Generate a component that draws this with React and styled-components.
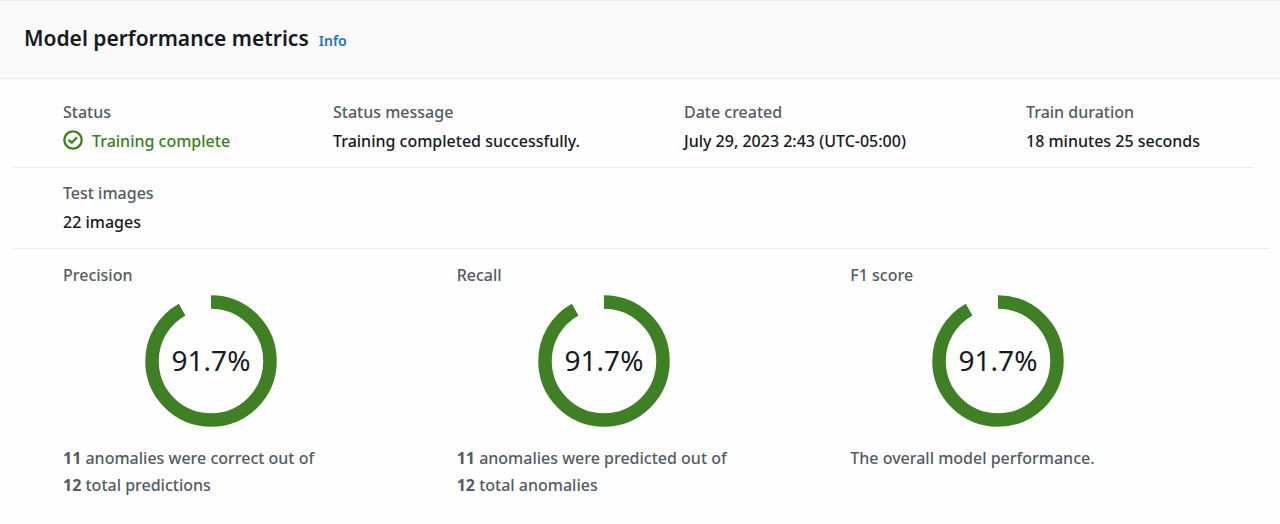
import React from "react";
import styled, { createGlobalStyle } from "styled-components";

const GlobalStyle = createGlobalStyle`
    * {
        box-sizing: border-box;
    }

    body {
        margin: 0;
        background: #fefefe;
        color: #16191f;
        font-family: "Noto Sans", "Open Sans", sans-serif;
        font-size: 16px;
        font-weight: 500;
        line-height: 27px;
    }
`;

const Header = styled.header`
    display: flex;
    align-items: baseline;
    gap: 10px;
    padding: 19px 24px 22px;
    background: #fafafa;
    border-top: 1px solid #eaeded;
    border-bottom: 1px solid #e4e8e8;
`;

const Title = styled.h2`
    margin: 0;
    font-size: 21px;
    font-weight: 600;
    line-height: 36px;
`;

const InfoLink = styled.a`
    color: #2374bb;
    font-size: 14px;
    font-weight: 600;
    text-decoration: none;

    &:hover {
        text-decoration: underline;
    }
`;

const Content = styled.main`
    padding: 8px 10px 0 12px;
`;

const Details = styled.dl`
    display: grid;
    grid-template-columns: ${({ $columns }) => $columns};
    margin: 0 ${({ $inset }) => $inset || "0"} 0 0;
    padding: 12px 0 12px 51px;
    border-bottom: 1px solid #e9ecec;
`;

const Field = styled.div`
    display: grid;
    gap: 2px;
    align-content: start;
`;

const Label = styled.dt`
    color: #545b64;
`;

const Value = styled.dd`
    display: flex;
    gap: 9px;
    margin: 0;
    color: ${({ $success }) => ($success ? "#3b8020" : "inherit")};
`;

const StatusIcon = styled.svg`
    width: 20px;
    height: 20px;
    margin-top: 2px;
    fill: none;
    stroke: currentColor;
    stroke-width: 2.3;
`;

const Metrics = styled.section`
    display: grid;
    grid-template-columns: repeat(3, 1fr);
    padding: 13px 26px 24px 51px;
`;

const MetricLabel = styled.h3`
    margin: 0;
    color: #545b64;
    font-size: 16px;
    font-weight: 500;
`;

const Chart = styled.svg`
    display: block;
    width: 132px;
    height: 132px;
    margin: 6px auto 18px;
`;

const MetricCard = styled.article`
    width: 75%;
    color: #545b64;
`;

const Percent = styled.text`
    fill: #16191f;
    font-size: 28px;
    font-weight: 400;
    text-anchor: middle;
`;

const Summary = styled.p`
    margin: 0;
`;

const Line = styled.span`
    display: block;
    white-space: nowrap;
`;

const SuccessIcon = () => (
    <StatusIcon viewBox="0 0 20 20" aria-hidden="true">
        <circle cx="10" cy="10" r="8.7" />
        <path d="M5.6 9.8 8.8 12.7 14 7.3" />
    </StatusIcon>
);

const RADIUS = 59;
const CIRCUMFERENCE = 2 * Math.PI * RADIUS;

const Ring = ({ label, value }) => (
    <Chart viewBox="0 0 132 132" role="img" aria-label={`${label} ${value}%`}>
        <circle
            cx="66"
            cy="66"
            r={RADIUS}
            fill="none"
            stroke="#3f8024"
            strokeWidth="13.5"
            strokeDasharray={`${(CIRCUMFERENCE * value) / 100} ${CIRCUMFERENCE}`}
            transform="rotate(-90 66 66)"
        />
        <Percent x="66" y="76">
            {value}%
        </Percent>
    </Chart>
);

const Metric = ({ label, value, children }) => (
    <MetricCard>
        <MetricLabel>{label}</MetricLabel>
        <Ring label={label} value={value} />
        <Summary>{children}</Summary>
    </MetricCard>
);

const App = () => (
    <>
        <GlobalStyle />
        <Header>
            <Title>Model performance metrics</Title>
            <InfoLink href="#info">Info</InfoLink>
        </Header>
        <Content>
            <Details $columns="270fr 351fr 342fr 228fr" $inset="16px">
                <Field>
                    <Label>Status</Label>
                    <Value $success>
                        <SuccessIcon />
                        Training complete
                    </Value>
                </Field>
                <Field>
                    <Label>Status message</Label>
                    <Value>Training completed successfully.</Value>
                </Field>
                <Field>
                    <Label>Date created</Label>
                    <Value>July 29, 2023 2:43 (UTC-05:00)</Value>
                </Field>
                <Field>
                    <Label>Train duration</Label>
                    <Value>18 minutes 25 seconds</Value>
                </Field>
            </Details>
            <Details $columns="1fr">
                <Field>
                    <Label>Test images</Label>
                    <Value>22 images</Value>
                </Field>
            </Details>
            <Metrics>
                <Metric label="Precision" value={91.7}>
                    <Line>
                        <strong>11</strong> anomalies were correct out of
                    </Line>
                    <Line>
                        <strong>12</strong> total predictions
                    </Line>
                </Metric>
                <Metric label="Recall" value={91.7}>
                    <Line>
                        <strong>11</strong> anomalies were predicted out of
                    </Line>
                    <Line>
                        <strong>12</strong> total anomalies
                    </Line>
                </Metric>
                <Metric label="F1 score" value={91.7}>
                    The overall model performance.
                </Metric>
            </Metrics>
        </Content>
    </>
);

export default App;
